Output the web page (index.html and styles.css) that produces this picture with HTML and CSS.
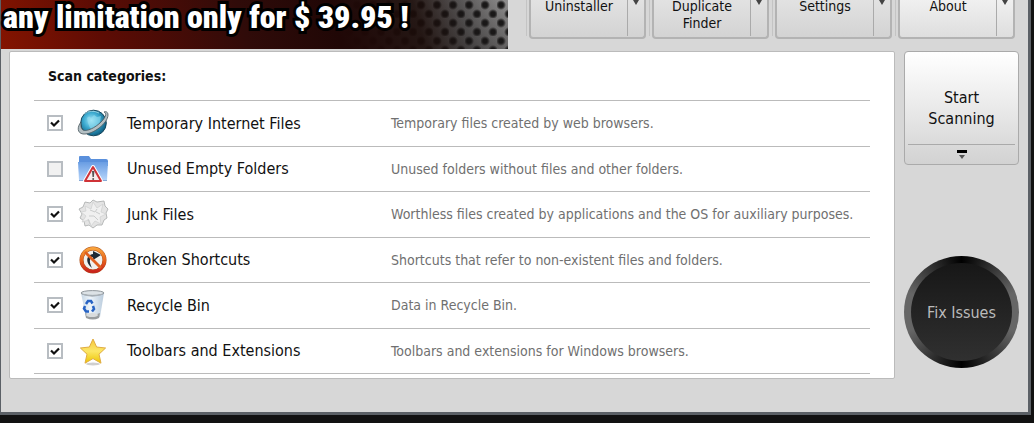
FILE: index.html
```html
<!DOCTYPE html>
<html lang="en">
<head>
<meta charset="utf-8">
<meta name="viewport" content="width=device-width, initial-scale=1">
<title>System Cleaner</title>
<link rel="stylesheet" href="styles.css">
</head>
<body>
<div class="window">
  <header class="header">
    <div class="banner"><p class="banner-text">any limitation only for $ 39.95 !</p></div>
    <nav class="toolbar">
      <div class="tool"><div class="split"><button class="split-main">Uninstaller</button><button class="split-drop" aria-label="Uninstaller options"></button></div></div>
      <div class="tool"><div class="split"><button class="split-main">Duplicate<br>Finder</button><button class="split-drop" aria-label="Duplicate Finder options"></button></div></div>
      <div class="tool"><div class="split"><button class="split-main">Settings</button><button class="split-drop" aria-label="Settings options"></button></div></div>
      <div class="tool"><div class="split split-light"><button class="split-main">About</button><button class="split-drop" aria-label="About options"></button></div></div>
    </nav>
  </header>
  <div class="content">
    <main class="panel">
      <h1 class="panel-title">Scan categories:</h1>
      <ul class="categories">
        <li class="category">
          <input class="check" type="checkbox" id="c1" checked>
          <svg class="icon" viewBox="0 0 32 32" aria-hidden="true">
            <defs><radialGradient id="globe" cx=".42" cy=".4" r=".65"><stop offset="0" stop-color="#a5e6f8"/><stop offset=".45" stop-color="#3fadd2"/><stop offset="1" stop-color="#075579"/></radialGradient></defs>
            <circle cx="16.500" cy="16" r="12.800" fill="url(#globe)" stroke="#17455a"/>
            <path d="M10 11q2-3 4 0l3-3 3 2 4-1-1 6-4 5-3 3-3-2-2-5z" fill="#9be1f2" opacity=".55"/>
            <path d="M7 7Q14 2 22 6" fill="none" stroke="#c8f1fa" opacity=".6"/>
            <path d="M4 15C0 20 0 26 6 27 16 28 31 16 31 8c0-3-2-4-4-3 5 2-2 11-11 16C8 25 3 25 4 15z" fill="#b4bfc3" stroke="#46555c" stroke-width=".8"/>
          </svg>
          <label class="name" for="c1">Temporary Internet Files</label>
          <span class="description">Temporary files created by web browsers.</span>
        </li>
        <li class="category">
          <input class="check" type="checkbox" id="c2">
          <svg class="icon" viewBox="0 0 32 32" aria-hidden="true">
            <defs><linearGradient id="folder" x2="0" y2="1"><stop offset="0" stop-color="#699de3"/><stop offset="1" stop-color="#b5d4fa"/></linearGradient></defs>
            <path d="M2 4q0-1 1-1h9l2 3h15q2 0 2 2v5H2z" fill="#5a90dc"/>
            <path d="M1 9h30l-1 18H2z" fill="url(#folder)"/>
            <path d="M2 27h28v1H2z" fill="#86a9d6"/>
            <path d="M16 14 24 28H8z" fill="#fff" stroke="#fff" stroke-width="4" stroke-linejoin="round"/>
            <path d="M16 14 24 28H8z" fill="#f7ecec" stroke="#cf3237" stroke-width="2" stroke-linejoin="round"/>
            <path d="M15 18h2.400l-.5 6h-1.400z" fill="#555"/><circle cx="16.200" cy="26" r="1" fill="#555"/>
          </svg>
          <label class="name" for="c2">Unused Empty Folders</label>
          <span class="description">Unused folders without files and other folders.</span>
        </li>
        <li class="category">
          <input class="check" type="checkbox" id="c3" checked>
          <svg class="icon" viewBox="0 0 32 32" aria-hidden="true">
            <path d="M8 4l5 1 3-3 4 2 7-1 1 5 3 3-2 4 1 5-3 2-2 5-5 0-4 3-4-3-4 1-1-5-4-3 2-4-3-5 4-2z" fill="#e4e4e4" stroke="#b0b2b2" stroke-width=".9"/>
            <path d="M8 8l6 3 2-7 4 6 6-4-2 8 5 2-6 3 1 7-6-3-4 5-2-6-7 2 4-6-5-4 5-1z" fill="#f0f0f0" stroke="#d0d2d2" stroke-width=".8"/>
            <path d="M13 12l5 2 2-3m-8 7 5 0 4 4m-2-8 4 2m-12 5 2 5" fill="none" stroke="#cacccc"/>
          </svg>
          <label class="name" for="c3">Junk Files</label>
          <span class="description">Worthless files created by applications and the OS for auxiliary purposes.</span>
        </li>
        <li class="category">
          <input class="check" type="checkbox" id="c4" checked>
          <svg class="icon" viewBox="0 0 32 32" aria-hidden="true">
            <defs><linearGradient id="ban" x2="0" y2="1"><stop offset="0" stop-color="#f8a23c"/><stop offset=".5" stop-color="#e8641d"/><stop offset="1" stop-color="#c9241c"/></linearGradient></defs>
            <circle cx="16" cy="16" r="11.500" fill="#f1f1ee"/>
            <path d="M15 24C8 19 9 11 16 10V7l8 4-8 5v-3c-4 1-4 5-1 11z" fill="#1d2a36"/>
            <circle cx="16" cy="16" r="11.500" fill="none" stroke="#a84d19" stroke-width="4"/>
            <circle cx="16" cy="16" r="11.500" fill="none" stroke="url(#ban)" stroke-width="3.200"/>
            <path d="M8 8l16 16" stroke="#e0601f" stroke-width="2.800"/>
          </svg>
          <label class="name" for="c4">Broken Shortcuts</label>
          <span class="description">Shortcuts that refer to non-existent files and folders.</span>
        </li>
        <li class="category">
          <input class="check" type="checkbox" id="c5" checked>
          <svg class="icon" viewBox="0 0 32 32" aria-hidden="true">
            <defs><linearGradient id="bin"><stop offset="0" stop-color="#c7d7e5"/><stop offset=".4" stop-color="#eef5fb"/><stop offset="1" stop-color="#b9cbdc"/></linearGradient></defs>
            <path d="M4 4h23l-4 24q-7 4-14 0z" fill="url(#bin)"/>
            <path d="M8 24q8 3 15 0l-1 5q-6 3-13 0z" fill="#999d9f"/>
            <ellipse cx="15" cy="26" rx="6" ry="2" fill="#d9dcdd"/>
            <ellipse cx="15.500" cy="4" rx="11.500" ry="2.400" fill="#dce2e6" stroke="#8f969b"/>
            <path d="M5 5q10 4 21 0" fill="none" stroke="#a9b1b8" stroke-width="1.300"/>
            <path d="M9 15l2-3h3l1.500 2.500M16 17l1 3-2 2.500M12 22.500H9l-2-3 1-2.500" fill="none" stroke="#2763c4" stroke-width="2.500"/>
          </svg>
          <label class="name" for="c5">Recycle Bin</label>
          <span class="description">Data in Recycle Bin.</span>
        </li>
        <li class="category">
          <input class="check" type="checkbox" id="c6" checked>
          <svg class="icon" viewBox="0 0 32 32" aria-hidden="true">
            <defs><linearGradient id="star" x2="0" y2="1"><stop offset="0" stop-color="#f6c53b"/><stop offset=".5" stop-color="#fce767"/><stop offset="1" stop-color="#edc500"/></linearGradient></defs>
            <ellipse cx="16" cy="29" rx="7" ry="1.500" fill="#cfcfcf"/>
            <path d="M16 4l3.600 8 9 1-6.600 6.200 2 9-8-4.600-8 4.600 2-9L3.400 13l9-1z" fill="url(#star)" stroke="#e0ac42" stroke-linejoin="round"/>
          </svg>
          <label class="name" for="c6">Toolbars and Extensions</label>
          <span class="description">Toolbars and extensions for Windows browsers.</span>
        </li>
      </ul>
    </main>
    <aside class="actions">
      <div class="scan">
        <button class="scan-main">Start<br>Scanning</button>
        <button class="scan-drop" aria-label="Scanning options"><svg width="10" height="9" viewBox="0 0 10 9" aria-hidden="true"><path d="M0 0h10v3H0z" fill="#000"/><path d="M2 5h6L5 9z" fill="#555"/></svg></button>
      </div>
      <button class="fix"><span class="fix-face">Fix Issues</span></button>
    </aside>
  </div>
</div>
</body>
</html>
```
FILE: styles.css
```css
* { box-sizing: border-box; }

body {
  margin: 0;
  min-height: 100vh;
  display: flex;
  flex-direction: column;
  padding: 0 3px 8px 0;
  background: #111;
  color: #111;
  font-family: "DejaVu Sans Condensed", Tahoma, sans-serif;
  font-size: 14px;
}

button {
  margin: 0;
  padding: 0;
  border: 0;
  background: none;
  color: inherit;
  font: inherit;
}

.window {
  flex: 1;
  display: flex;
  flex-direction: column;
  background: #d7d7d7;
  border: solid #5b6066;
  border-width: 0 3px 3px 1px;
}

.header {
  display: flex;
  justify-content: space-between;
  align-items: flex-start;
  height: 51px;
  padding-right: 13px;
}

.banner {
  width: 507px;
  height: 49px;
  background:
    linear-gradient(75deg, #841400 0, #5e0c04 100px, #300b09 240px, #200706 330px, rgba(26, 12, 9, 0.92) 410px, rgba(22, 18, 18, 0.6) 455px, transparent 530px),
    radial-gradient(circle at 4px 5px, #1c1c1c 2px, #383838 3px, transparent 5px) 0 0 / 16px 18px,
    radial-gradient(circle at 12px 14px, #1c1c1c 2px, #383838 3px, transparent 5px) 0 0 / 16px 18px,
    linear-gradient(180deg, #b4b4b4, #888);
}

.banner-text {
  margin: 0;
  padding-left: 2px;
  color: #fff;
  font: 900 32px/34px "Liberation Sans Narrow", "Roboto Condensed", sans-serif;
  white-space: nowrap;
  -webkit-text-stroke: 6px #000;
  paint-order: stroke fill;
}

.toolbar {
  display: flex;
  gap: 3px;
}

.tool {
  height: 36px;
  padding-left: 2px;
  border-left: 1px solid #c4c4c4;
}

.split {
  display: flex;
  width: 117px;
  height: 39px;
  border: 2px solid #b3b3b3;
  border-top: 0;
  border-radius: 0 0 4px 4px;
  background: linear-gradient(#e2e2e2, #d3d3d3);
}

.split-light { background: linear-gradient(#f0f0f0, #dedede); }

.split-main {
  flex: 1;
  align-self: flex-start;
  margin-top: -2px;
  line-height: 17px;
}

.split-drop {
  width: 17px;
  height: 36px;
  border-left: 1px solid #aaa;
  display: flex;
  justify-content: center;
}

.split-drop::before {
  content: "";
  border: solid transparent;
  border-width: 5px 3px 0;
  border-top-color: #444;
}

.content {
  flex: 1;
  display: flex;
  gap: 9px;
  padding: 0 9px 33px 8px;
}

.panel {
  flex: 1;
  display: flex;
  flex-direction: column;
  padding: 0 24px 4px;
  background: #fff;
  border: 1px solid #bbb;
  border-radius: 2px;
}

.panel-title {
  margin: 0;
  padding: 0 14px;
  font-size: 14px;
  line-height: 48px;
}

.categories {
  flex: 1;
  display: grid;
  grid-auto-rows: 1fr;
  margin: 0;
  padding: 0;
  list-style: none;
  border-bottom: 1px solid #bbb;
}

.category {
  display: grid;
  grid-template-columns: 16px 32px 248px 1fr;
  column-gap: 16px;
  align-items: center;
  padding-left: 13px;
  border-top: 1px solid #bbb;
}

.check {
  appearance: none;
  width: 16px;
  height: 16px;
  margin: 0;
  border: 2px solid #b8bdc2;
  background: #f1f1f1;
}

.check:checked {
  background: #fff url("data:image/svg+xml,%3Csvg xmlns='http://www.w3.org/2000/svg' viewBox='0 0 12 12'%3E%3Cpath d='M2 5.500 5 8.500 10 3.500' fill='none' stroke='%23111' stroke-width='2.200'/%3E%3C/svg%3E") center / 12px 12px no-repeat;
}

.icon {
  width: 32px;
  height: 32px;
  margin-left: -2px;
}

.name { font-size: 16px; }

.description { color: #707070; }

.actions {
  width: 115px;
  display: flex;
  flex-direction: column;
  justify-content: space-between;
  padding-bottom: 11px;
}

.scan {
  display: flex;
  flex-direction: column;
  height: 114px;
  border: 1px solid #aaa;
  border-radius: 4px;
  background: linear-gradient(#fff, #ececec 45%, #d2d2d2);
  padding: 0 3px;
}

.scan-main {
  flex: 1;
  padding-top: 20px;
  font-size: 16px;
  line-height: 21px;
  border-bottom: 1px solid #aaa;
}

.scan-drop { height: 19px; line-height: 0; }

.fix {
  display: flex;
  height: 112px;
  padding: 7px;
  border-radius: 50%;
  background: conic-gradient(#000 0deg, #666 70deg, #666 110deg, #000 180deg, #666 250deg, #666 290deg, #000 360deg);
  color: #bbb;
  font-size: 16px;
}

.fix-face {
  flex: 1;
  align-self: stretch;
  display: grid;
  place-items: center;
  border-radius: 50%;
  background: linear-gradient(#171717, #303030);
}
```
